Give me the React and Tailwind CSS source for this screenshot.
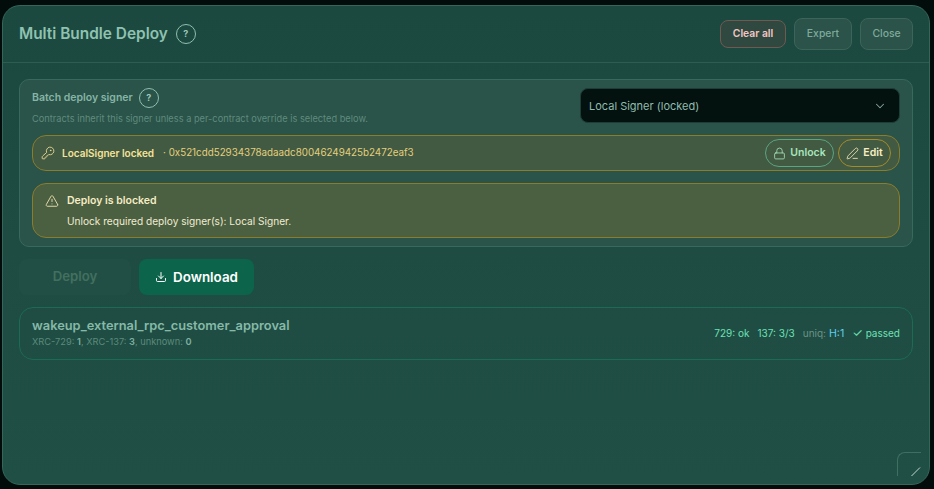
import { ChevronDown, Download, KeyRound, Lock, PenLine, TriangleAlert } from 'lucide-react'

function HelpDot() {
  return (
    <span className="flex h-5 w-5 items-center justify-center rounded-full border border-[#8fbfb0] text-[9px] font-bold text-[#9cc7b9]">?</span>
  )
}

export default function App() {
  return (
    <div className="h-[489px] w-[934px] overflow-hidden bg-[#020d0b] pb-[4px] pl-[2px] pr-[4px] pt-[5px] font-['Inter',sans-serif]">
      <div className="relative flex h-[480px] flex-col overflow-hidden rounded-[18px] border border-[#34665a] bg-gradient-to-b from-[#1c493f] to-[#204f45]">
        {/* Header */}
        <div className="flex h-[57px] shrink-0 items-center justify-between border-b border-[#2d5c50] pl-4 pr-4">
          <div className="flex items-center gap-2">
            <h1 className="text-[15.4px] font-semibold text-[#8fc2b1]">Multi Bundle Deploy</h1>
            <HelpDot />
          </div>
          <div className="flex items-center gap-2">
            <button className="h-[28px] w-[66px] rounded-lg border border-[#6f5a52] bg-[#2f4840] text-[10.3px] font-semibold text-[#f3c6c6]">
              Clear all
            </button>
            <button className="h-8 w-[58px] rounded-lg border border-[#3d6459] bg-[#2b5349] text-[10.4px] font-medium text-[#7fa99c]">Expert</button>
            <button className="h-8 w-[53px] rounded-lg border border-[#3d6459] bg-[#2b5349] text-[10.4px] font-medium text-[#7fa99c]">Close</button>
          </div>
        </div>

        <div className="flex flex-col px-4 pt-4">
          {/* Signer panel */}
          <section className="rounded-[10px] border border-[#38695d] bg-[#2a5349] px-3 pb-2 pt-2">
            <div className="flex h-[35px] items-start justify-between">
              <div>
                <div className="flex items-center gap-1.5">
                  <span className="text-[10.5px] font-semibold text-[#86b5a6]">Batch deploy signer</span>
                  <HelpDot />
                </div>
                <p className="mt-[4px] text-[9.25px] text-[#5f8b7e]">Contracts inherit this signer unless a per-contract override is selected below.</p>
              </div>
              <div className="flex h-[35px] w-[320px] items-center justify-between rounded-lg border border-[#1d3d36] bg-[#04120f] pl-[8px] pr-3 pt-[1px] text-[11px] text-[#8fbcae]">
                <span>Local Signer (locked)</span>
                <ChevronDown className="h-3.5 w-3.5 text-[#8aa79e]" strokeWidth={1.75} />
              </div>
            </div>

            <div className="mt-3 flex h-[36px] items-center justify-between rounded-[14px] border border-[#8a7d2c] bg-[#425a41] pl-2 pr-2">
              <div className="flex items-center text-[10px]">
                <KeyRound className="h-3.5 w-3.5 text-[#f0dd98]" strokeWidth={1.5} />
                <span className="ml-[7px] font-semibold text-[#f6e39a]">LocalSigner locked</span>
                <span className="ml-[9px] text-[9.8px] text-[#e3cf7f]">· 0x521cdd52934378adaadc80046249425b2472eaf3</span>
              </div>
              <div className="flex items-center gap-1">
                <button className="flex h-[28px] w-[69px] items-center justify-center gap-[4px] rounded-full border border-[#5aa584] text-[10.5px] font-semibold text-[#a7e5bd]">
                  <Lock className="h-[13px] w-[13px]" strokeWidth={1.5} />
                  Unlock
                </button>
                <button className="flex h-[28px] w-[53px] items-center justify-center gap-1 rounded-full border border-[#a38c2b] text-[10.5px] font-semibold text-[#f7efc3]">
                  <PenLine className="h-[13px] w-[13px]" strokeWidth={1.5} />
                  Edit
                </button>
              </div>
            </div>

            <div className="mt-3 flex h-[55px] items-start gap-[7px] rounded-[14px] border border-[#8a7d2c] bg-[#4b5f41] px-3 pt-[9px]">
              <TriangleAlert className="mt-[1px] h-3.5 w-3.5 text-[#f3e9b8]" strokeWidth={1.5} />
              <div className="pl-[1px]">
                <p className="text-[10.5px] font-semibold text-[#f5edc5]">Deploy is blocked</p>
                <p className="mt-[5px] text-[10.15px] text-[#f0ecd2]">Unlock required deploy signer(s): Local Signer.</p>
              </div>
            </div>
          </section>

          {/* Actions */}
          <div className="mt-3 flex gap-2">
            <button className="h-9 w-[112px] rounded-lg bg-[#224f45] text-[13.2px] font-semibold text-[#42705f]">Deploy</button>
            <button className="flex h-9 w-[115px] items-center justify-center gap-[6px] rounded-lg bg-[#0c644a] text-[13.4px] font-semibold text-white">
              <Download className="h-3 w-3" strokeWidth={2} />
              Download
            </button>
          </div>

          {/* Bundle row */}
          <div className="mt-3 flex h-[53px] items-center justify-between rounded-[14px] border border-[#1d6a55] pl-3 pr-3">
            <div>
              <p className="text-[12.85px] font-semibold leading-[16px] text-[#86b9a8]">wakeup_external_rpc_customer_approval</p>
              <p className="mt-[1px] text-[9.25px] text-[#5c8a7c]">
                XRC-729: <b className="font-semibold text-[#7fb0a0]">1</b>, XRC-137: <b className="font-semibold text-[#7fb0a0]">3</b>, unknown: <b className="font-semibold text-[#7fb0a0]">0</b>
              </p>
            </div>
            <div className="flex items-center text-[10px] text-[#6ee0b6]">
              <span>729: ok</span>
              <span className="ml-[8px]">137: 3/3</span>
              <span className="ml-[8px] text-[#6c9287]">uniq:</span>
              <span className="ml-[3px] text-[10.6px] text-[#5fcfee]">H:1</span>
              <span className="ml-[8px]"><span className="text-[12px] leading-[10px]">✓</span> passed</span>
            </div>
          </div>
        </div>

        {/* Resize handle */}
        <div className="absolute bottom-2 right-2 h-6 w-6 rounded-tl-lg border-l border-t border-[#3f6e62]">
          <svg viewBox="0 0 24 24" className="absolute left-0 top-0 h-6 w-6">
            <path d="M13.5 23L22 14.5" stroke="#c3d4cf" strokeWidth="1" fill="none" />
          </svg>
        </div>
      </div>
    </div>
  )
}
